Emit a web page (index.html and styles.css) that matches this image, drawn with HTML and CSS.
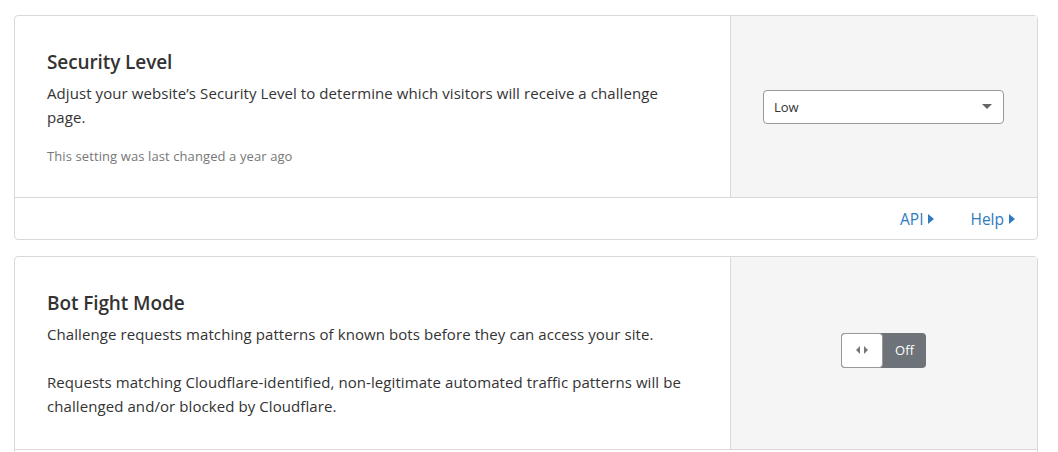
FILE: index.html
```html
<!DOCTYPE html>
<html>
<head>
<meta charset="utf-8">
<link rel="stylesheet" href="styles.css">
</head>
<body>
<div class="page">
  <section class="card">
    <div class="card-body">
      <div class="card-main">
        <h3 class="card-title">Security Level</h3>
        <p class="card-text">Adjust your website’s Security Level to determine which visitors will receive a challenge page.</p>
        <p class="card-meta">This setting was last changed a year ago</p>
      </div>
      <div class="card-control">
        <div class="select">
          <span class="select-value">Low</span>
          <span class="select-caret"></span>
        </div>
      </div>
    </div>
    <div class="card-footer">
      <a class="link">API<span class="tri"></span></a>
      <a class="link">Help<span class="tri"></span></a>
    </div>
  </section>

  <section class="card">
    <div class="card-body">
      <div class="card-main">
        <h3 class="card-title">Bot Fight Mode</h3>
        <p class="card-text">Challenge requests matching patterns of known bots before they can access your site.</p>
        <p class="card-text para">Requests matching Cloudflare-identified, non-legitimate automated traffic patterns will be challenged and/or blocked by Cloudflare.</p>
      </div>
      <div class="card-control">
        <div class="toggle">
          <span class="toggle-knob">
            <svg width="12" height="8" viewBox="0 0 12 8"><path d="M4 0 L0 4 L4 8 Z M8 0 L12 4 L8 8 Z" fill="#777"/></svg>
          </span>
          <span class="toggle-label">Off</span>
        </div>
      </div>
    </div>
    <div class="card-footer"></div>
  </section>
</div>
</body>
</html>
```

FILE: styles.css
```css
html, body {
  margin: 0;
  padding: 0;
  background: #fff;
}
body {
  font-family: "Open Sans", "Noto Sans", sans-serif;
  color: #333;
  height: 452px;
  overflow: hidden;
}
.page {
  padding: 15px 20px 0 14px;
  display: flex;
  flex-direction: column;
  gap: 16px;
}
.card {
  border: 1px solid #d9d9d9;
  border-radius: 4px;
  background: #fff;
}
.card-body {
  display: flex;
  min-height: 181px;
}
.card-main {
  flex: 1;
  padding: 34px 32px 31px 32px;
}
.card-title {
  margin: 0;
  font-size: 19px;
  line-height: 24px;
  font-weight: 600;
  color: #333;
  letter-spacing: -0.1px;
}
.card-text {
  margin: 7px 0 0;
  font-size: 15px;
  line-height: 24px;
  color: #333;
  max-width: 640px;
  letter-spacing: 0.08px;
}
.card-text.para {
  margin-top: 24px;
}
.card-meta {
  margin: 17px 0 0;
  font-size: 13px;
  line-height: 20px;
  color: #777;
  letter-spacing: 0.1px;
}
.card-control {
  width: 241px;
  padding: 0 33px 0 32px;
  background: #f5f5f5;
  border-left: 1px solid #d9d9d9;
  display: flex;
  align-items: center;
  justify-content: center;
}
.select {
  width: 100%;
  height: 34px;
  box-sizing: border-box;
  border: 1px solid #999;
  border-radius: 4px;
  background: #fff;
  display: flex;
  align-items: center;
  justify-content: space-between;
  padding: 0 11px 0 10px;
}
.select-value {
  font-size: 13px;
  color: #333;
}
.select-caret {
  width: 0;
  height: 0;
  border-left: 5px solid transparent;
  border-right: 5px solid transparent;
  border-top: 5px solid #666;
}
.card-footer {
  border-top: 1px solid #d9d9d9;
  height: 41px;
  display: flex;
  align-items: center;
  justify-content: flex-end;
  gap: 36px;
  padding-right: 22px;
}
.link {
  font-size: 15.5px;
  color: #2f7bbf;
  display: inline-flex;
  align-items: center;
  gap: 5px;
  cursor: pointer;
}
.tri {
  width: 0;
  height: 0;
  border-top: 5px solid transparent;
  border-bottom: 5px solid transparent;
  border-left: 6px solid #2f7bbf;
}
.toggle {
  display: flex;
  width: 85px;
  height: 35px;
  border-radius: 4px;
  overflow: hidden;
  background: #6d7378;
  margin-top: -6px;
}
.toggle-knob {
  width: 42px;
  box-sizing: border-box;
  background: #fff;
  border: 1px solid #999;
  border-radius: 4px;
  display: flex;
  align-items: center;
  justify-content: center;
}
.toggle-label {
  flex: 1;
  display: flex;
  align-items: center;
  justify-content: center;
  color: #fff;
  font-size: 13px;
}
```
